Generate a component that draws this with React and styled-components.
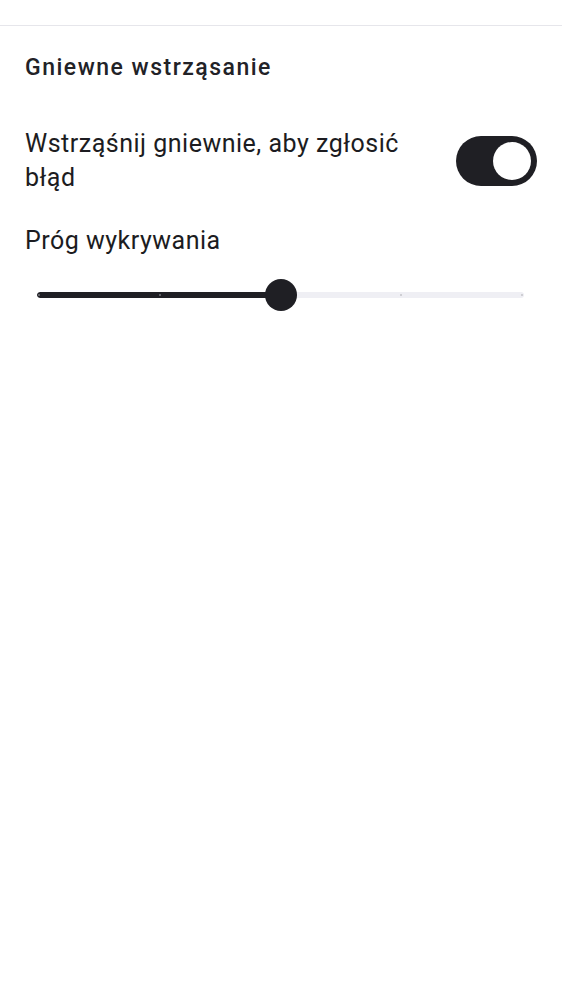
import React from 'react'
import styled, { createGlobalStyle } from 'styled-components'

const GlobalStyle = createGlobalStyle`
  html, body {
    margin: 0;
    padding: 0;
    background: #ffffff;
    font-family: Roboto, "Noto Sans", "Liberation Sans", sans-serif;
    color: #1c1c21;
  }
`

const Page = styled.div`
  width: 562px;
  min-height: 1000px;
  background: #fff;
`

const TopBar = styled.div`
  height: 25px;
  border-bottom: 1px solid #e6e6eb;
`

const Content = styled.div`
  padding: 27px 25px 0 25px;
  display: flex;
  flex-direction: column;
`

const Title = styled.h2`
  margin: 0;
  font-size: 23px;
  line-height: 30px;
  font-weight: 500;
  letter-spacing: 1.5px;
  color: #222227;
`

const Row = styled.div`
  display: flex;
  align-items: center;
  gap: 16px;
  margin-top: 44px;
`

const Label = styled.div`
  flex: 1;
  font-size: 25px;
  line-height: 34px;
  font-weight: 400;
  letter-spacing: 0.5px;
  margin-top: ${p => p.mt || 0}px;
`

const Switch = styled.div`
  flex: none;
  width: 81px;
  height: 50px;
  border-radius: 25px;
  background: ${p => (p.on ? '#1f1f24' : '#e6e6eb')};
  display: flex;
  align-items: center;
  justify-content: ${p => (p.on ? 'flex-end' : 'flex-start')};
  padding: 0 6px;
  box-sizing: border-box;
`

const Knob = styled.div`
  width: 38px;
  height: 38px;
  border-radius: 50%;
  background: #fff;
`

const SliderWrap = styled.div`
  margin: 21px 0 0 12px;
  width: 487px;
  height: 32px;
  position: relative;
  display: flex;
  align-items: center;
`

const Track = styled.div`
  width: 100%;
  height: 6px;
  border-radius: 3px;
  background: #efeff4;
  position: relative;
  overflow: hidden;
`

const Fill = styled.div`
  height: 100%;
  background: #1f1f24;
  border-radius: 3px;
`

const Tick = styled.span`
  position: absolute;
  top: 2px;
  width: 2px;
  height: 2px;
  border-radius: 1px;
  background: ${p => (p.active ? '#77777c' : '#c4c4ca')};
`

const Thumb = styled.div`
  position: absolute;
  top: 0;
  width: 32px;
  height: 32px;
  margin-left: -16px;
  border-radius: 50%;
  background: #1f1f24;
`

const ticks = [0, 0.25, 0.5, 0.75, 1]

const App = () => {
  const value = 0.5
  const inset = 2
  const usable = 487 - inset * 2
  return (
    <Page>
      <GlobalStyle />
      <TopBar />
      <Content>
        <Title>Gniewne wstrząsanie</Title>
        <Row>
          <Label>Wstrząśnij gniewnie, aby zgłosić błąd</Label>
          <Switch on>
            <Knob />
          </Switch>
        </Row>
        <Label mt={29}>Próg wykrywania</Label>
        <SliderWrap>
          <Track>
            <Fill style={{ width: inset + usable * value }} />
            {ticks.map(t => (
              <Tick
                key={t}
                active={t <= value}
                style={{ left: inset + usable * t - 1 }}
              />
            ))}
          </Track>
          <Thumb style={{ left: inset + usable * value }} />
        </SliderWrap>
      </Content>
    </Page>
  )
}

export default App
